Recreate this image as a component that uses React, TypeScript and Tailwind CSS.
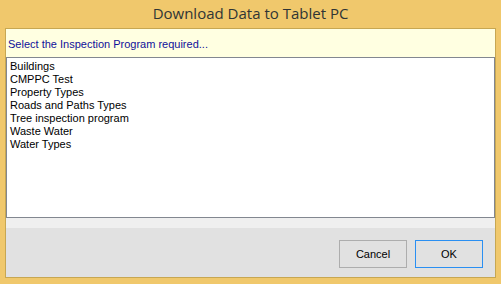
import React from 'react';

const programs = [
  'Buildings',
  'CMPPC Test',
  'Property Types',
  'Roads and Paths Types',
  'Tree inspection program',
  'Waste Water',
  'Water Types',
];

const App: React.FC = () => {
  return (
    <div className="w-[501px] h-[284px] bg-[#f0c86c] flex flex-col px-[5px] pb-[6px] overflow-hidden">
      <div className="h-[28px] flex items-center justify-center text-[15px] text-[#2f3535] font-['Open_Sans',sans-serif] pb-[2px]">
        Download Data to Tablet PC
      </div>
      <div className="flex-1 flex flex-col border border-[#c7a752] bg-[#e1e1e1] font-['Liberation_Sans',Arial,sans-serif] text-[11px]">
        <div className="h-[28px] bg-[#ffffe1] flex items-center pl-[2px] pt-[2px] text-[#10109a]">
          Select the Inspection Program required...
        </div>
        <div className="h-[161px] bg-white border border-[#828790] pt-[2px] pl-[3px] text-black">
          {programs.map(p => (
            <div key={p} className="leading-[13px]">{p}</div>
          ))}
        </div>
        <div className="h-[10px] bg-[#efefef]" />
        <div className="flex-1 flex justify-end items-start gap-[8px] pt-[12px] pr-[12px]">
          <button className="w-[68px] h-[28px] bg-[#e1e1e1] border border-[#adadad] text-black">Cancel</button>
          <button className="w-[68px] h-[28px] bg-[#e1e1e1] border border-[#2a8ff2] text-black">OK</button>
        </div>
      </div>
    </div>
  );
};

export default App;
